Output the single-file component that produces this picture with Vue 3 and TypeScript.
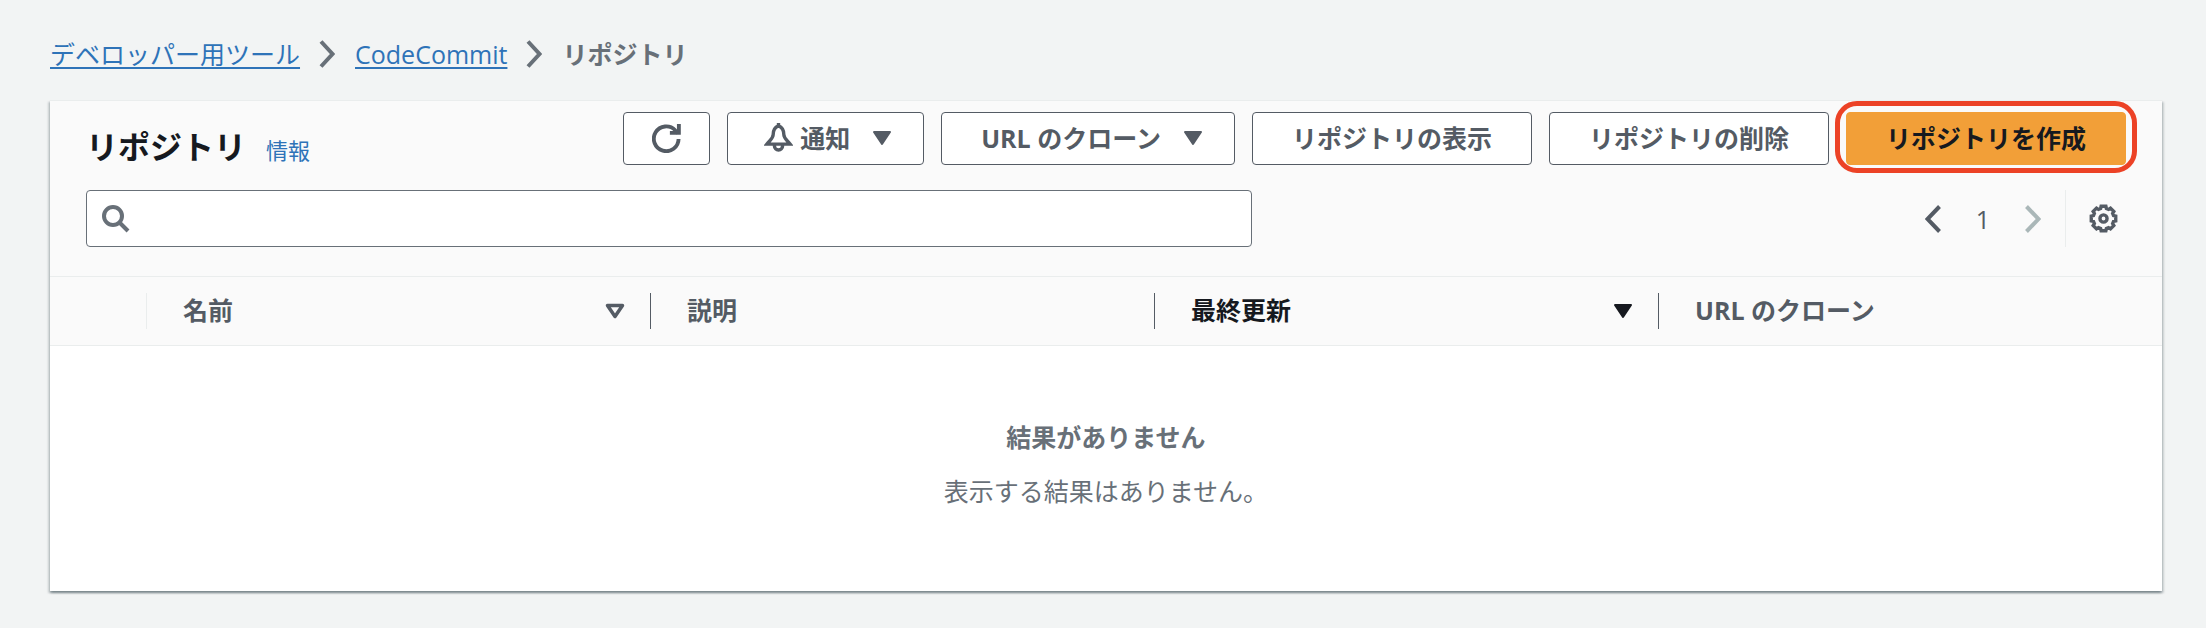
<script setup lang="ts">
import { ref } from 'vue'

interface Column {
  label: string
  sort: 'none' | 'available' | 'active'
}

const query = ref('')
const page = ref(1)

const columns: Column[] = [
  { label: '名前', sort: 'available' },
  { label: '説明', sort: 'none' },
  { label: '最終更新', sort: 'active' },
  { label: 'URL のクローン', sort: 'none' },
]

// Outline of an eight-toothed gear centred in a 30 x 30 box.
function gearOutline(): string {
  const corners: string[] = []
  for (let tooth = 0; tooth < 8; tooth++) {
    for (const [offset, radius] of [[-11, 12.9], [11, 12.9], [16, 10.8], [29, 10.8]]) {
      const angle = ((tooth * 45 + offset) * Math.PI) / 180
      corners.push(`${(15 + radius * Math.cos(angle)).toFixed(2)} ${(15 + radius * Math.sin(angle)).toFixed(2)}`)
    }
  }
  return `M${corners.join('L')}Z`
}

const gear = gearOutline()
</script>

<template>
  <div class="page">
    <nav class="breadcrumbs" aria-label="パンくずリスト">
      <a href="#tools">デベロッパー用ツール</a>
      <svg class="sep" viewBox="0 0 16 28" aria-hidden="true"><path d="M2 1.5 13.5 14 2 26.5" /></svg>
      <a href="#codecommit">CodeCommit</a>
      <svg class="sep" viewBox="0 0 16 28" aria-hidden="true"><path d="M2 1.5 13.5 14 2 26.5" /></svg>
      <span class="current" aria-current="page">リポジトリ</span>
    </nav>

    <main class="panel">
      <header class="head">
        <div class="title-row">
          <div class="title">
            <h1>リポジトリ</h1>
            <a href="#info">情報</a>
          </div>
          <div class="actions">
            <button type="button" class="btn refresh" aria-label="更新">
              <svg class="icon" viewBox="0 0 30 30" aria-hidden="true">
                <path d="M27.500 15.500A12.800 12.800 0 1 1 24 6.500l3 3" />
                <path d="M27.800 0v9.200H18.500" />
              </svg>
            </button>
            <button type="button" class="btn notify">
              <svg class="icon bell" viewBox="0 0 30 30" aria-hidden="true">
                <path d="M15 3c-4 1.500-5.500 5-5.500 9 0 4-3 5.500-6.500 9.800h24c-3.500-4.300-6.500-5.800-6.500-9.800 0-4-1.500-7.500-5.500-9z" />
                <path d="M10.800 22v1.800a4.200 4.200 0 0 0 8.400 0V22M15 0v3" />
              </svg>
              <span>通知</span>
              <svg class="caret" viewBox="0 0 20 16" aria-hidden="true"><path d="M2 2h16l-8 12z" /></svg>
            </button>
            <button type="button" class="btn">
              <span>URL のクローン</span>
              <svg class="caret" viewBox="0 0 20 16" aria-hidden="true"><path d="M2 2h16l-8 12z" /></svg>
            </button>
            <button type="button" class="btn">リポジトリの表示</button>
            <button type="button" class="btn">リポジトリの削除</button>
            <button type="button" class="btn primary">リポジトリを作成</button>
          </div>
        </div>

        <div class="filter-row">
          <label class="search">
            <svg viewBox="0 0 28 28" aria-hidden="true">
              <circle cx="11" cy="11" r="9" />
              <path d="m17.500 17.500 8.500 8.500" />
            </svg>
            <input v-model="query" type="search" aria-label="リポジトリを検索" />
          </label>
          <div class="pager">
            <button type="button" class="plain" aria-label="前のページ">
              <svg class="arrow" viewBox="0 0 16 28" aria-hidden="true"><path d="M14.500 1.500 2.500 14l12 12.500" /></svg>
            </button>
            <span class="num">{{ page }}</span>
            <button type="button" class="plain" aria-label="次のページ" disabled>
              <svg class="arrow" viewBox="0 0 16 28" aria-hidden="true"><path d="M1.500 1.500 13.500 14l-12 12.500" /></svg>
            </button>
            <button type="button" class="plain settings" aria-label="設定">
              <svg class="icon gear" viewBox="0 0 30 30" aria-hidden="true">
                <path :d="gear" />
                <circle cx="15" cy="15" r="3.700" />
              </svg>
            </button>
          </div>
        </div>
      </header>

      <table>
        <colgroup>
          <col class="c-select" />
          <col class="c-data" />
          <col class="c-data" />
          <col class="c-data" />
          <col />
        </colgroup>
        <thead>
          <tr>
            <td></td>
            <th v-for="col in columns" :key="col.label" scope="col" :class="{ active: col.sort === 'active' }">
              <div class="cell">
                <span>{{ col.label }}</span>
                <svg v-if="col.sort !== 'none'" class="caret" :class="{ hollow: col.sort === 'available' }" viewBox="0 0 20 16" aria-hidden="true">
                  <path v-if="col.sort === 'active'" d="M2 2h16l-8 12z" />
                  <path v-else d="M2.500 2.500h15l-7.500 11z" />
                </svg>
              </div>
            </th>
          </tr>
        </thead>
        <tbody>
          <tr>
            <td colspan="5" class="empty">
              <strong>結果がありません</strong>
              <p>表示する結果はありません。</p>
            </td>
          </tr>
        </tbody>
      </table>
    </main>
  </div>
</template>

<style>
body {
  background: #f2f4f4;
}
</style>

<style scoped>
.page {
  padding: 35px 44px 36px 50px;
  box-sizing: border-box;
  color: #545b64;
  font: 25px/36px "Open Sans", "Noto Sans CJK JP", sans-serif;
}

a {
  color: #2e73b8;
}

svg {
  display: block;
  flex: none;
  fill: none;
  stroke: currentColor;
  stroke-width: 4;
}

.breadcrumbs {
  display: flex;
  align-items: center;
  height: 37px;
  margin-bottom: 28px;
}

.breadcrumbs a {
  text-underline-offset: 3px;
  text-decoration-thickness: 2px;
}

.sep {
  width: 16px;
  height: 28px;
  margin: 0 20px 0 19px;
  color: #687078;
}

.current {
  color: #687078;
  font-weight: 700;
}

.panel {
  background: #fff;
  border-top: 1px solid #eaeded;
  box-shadow:
    0 2px 2px rgba(0, 28, 36, 0.3),
    2px 2px 2px rgba(0, 28, 36, 0.15),
    -2px 2px 2px rgba(0, 28, 36, 0.15);
}

.head {
  padding: 11px 36px 29px;
  background: #fafafa;
  border-bottom: 1px solid #eaeded;
}

.title-row,
.filter-row {
  display: flex;
  justify-content: space-between;
}

.title-row {
  align-items: flex-start;
  margin-bottom: 23px;
}

.title {
  display: flex;
  align-items: baseline;
  gap: 20px;
  padding-top: 15px;
}

h1 {
  margin: 0;
  color: #16191f;
  font-size: 32px;
  line-height: 40px;
}

.title a {
  font-size: 22px;
  line-height: 32px;
  text-decoration: none;
}

.actions {
  display: flex;
  gap: 17px;
}

.btn {
  display: flex;
  align-items: center;
  box-sizing: border-box;
  height: 53px;
  padding: 0 39px 2px;
  border: 1px solid #545b64;
  border-radius: 4px;
  background: #fff;
  color: #545b64;
  font: inherit;
  font-weight: 700;
  white-space: nowrap;
}

.btn .caret {
  margin-left: 22px;
}

.btn:has(.caret) {
  padding-right: 31px;
}

.refresh {
  padding: 0 28px;
}

.notify {
  padding-left: 36px;
}

.bell {
  margin-right: 7px;
  stroke-width: 3.5;
}

.primary {
  position: relative;
  border-color: #f29f38;
  background: #f29f38;
  color: #16191f;
}

/* Highlight ring around the main action */
.primary::after {
  content: "";
  position: absolute;
  inset: -12px -12px -9px;
  border: 5px solid #ec4226;
  border-radius: 22px;
}

.icon {
  width: 29px;
  height: 29px;
}

.gear {
  stroke-width: 3.5;
}

.caret {
  width: 20px;
  height: 16px;
  fill: currentColor;
  stroke-width: 2;
  stroke-linejoin: round;
}

.hollow {
  fill: none;
  stroke-width: 3.5;
}

.filter-row {
  align-items: center;
}

.search {
  display: flex;
  flex: 1;
  align-items: center;
  box-sizing: border-box;
  max-width: 1166px;
  height: 57px;
  padding: 0 15px;
  border: 1px solid #687078;
  border-radius: 4px;
  background: #fff;
  color: #687078;
}

.search svg {
  width: 28px;
  height: 28px;
}

.search input {
  flex: 1;
  min-width: 0;
  margin-left: 12px;
  border: 0;
  outline: 0;
  background: none;
  font: inherit;
}

.pager {
  display: flex;
  align-items: center;
}

.plain {
  display: flex;
  align-items: center;
  padding: 0;
  border: 0;
  background: none;
  color: #545b64;
}

.plain:disabled {
  color: #aab7b8;
}

.arrow {
  width: 16px;
  height: 28px;
}

.num {
  width: 84px;
  text-align: center;
}

.settings {
  height: 57px;
  margin-left: 24px;
  padding: 0 8px 0 23px;
  border-left: 1px solid #eaeded;
}

table {
  width: 100%;
  border-collapse: collapse;
  table-layout: fixed;
}

.c-select {
  width: 96px;
}

.c-data {
  width: 504px;
}

thead tr {
  background: #fafafa;
  border-bottom: 1px solid #eaeded;
}

th,
td {
  padding: 0;
}

th {
  text-align: left;
}

thead th,
thead td {
  height: 68px;
}

.cell {
  display: flex;
  align-items: center;
  justify-content: space-between;
  height: 36px;
  padding: 0 25px 0 36px;
  border-left: 1px solid #545b64;
}

.cell span {
  padding-bottom: 2px;
}

th:nth-child(2) .cell {
  border-color: #eaeded;
}

.active {
  color: #16191f;
}

.empty {
  padding: 73px 0 82px;
  color: #687078;
  text-align: center;
}

.empty strong {
  display: block;
}

.empty p {
  margin: 18px 0 0;
}
</style>
